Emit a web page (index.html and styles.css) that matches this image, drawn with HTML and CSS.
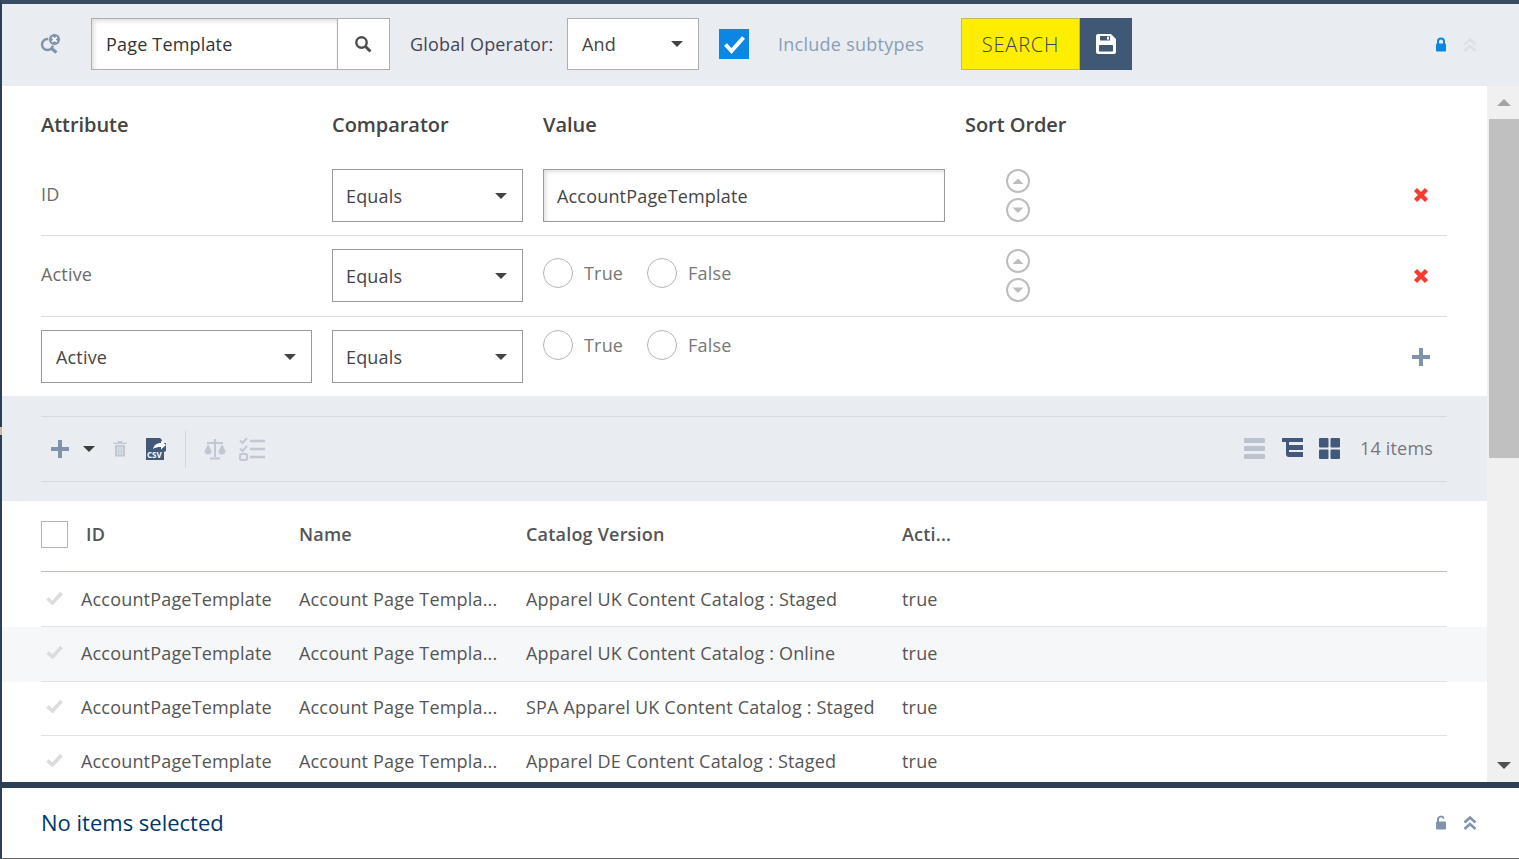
FILE: index.html
```html
<!DOCTYPE html>
<html lang="en">
<head>
<meta charset="utf-8">
<title>Advanced Search</title>
<link rel="stylesheet" href="styles.css">
</head>
<body>
<div class="frame">
  <header class="topbar">
    <svg class="ic-reset" viewBox="0 0 21 21" width="21" height="21"><circle cx="7.500" cy="11.500" r="5.500" fill="none" stroke="#8193ab" stroke-width="2.400"/><path d="M11.500 15.500l5 4" stroke="#8193ab" stroke-width="3.200" fill="none"/><circle cx="14.500" cy="6.500" r="6" fill="#8193ab" stroke="#e9edf2" stroke-width="1"/><path d="M12.200 4.200l4.600 4.600M16.800 4.200l-4.600 4.600" stroke="#fff" stroke-width="1.800"/></svg>
    <div class="type-field">
      <div class="type-value">Page Template</div>
      <div class="type-btn"><svg viewBox="0 0 18 18" width="18" height="18"><circle cx="7.500" cy="7.500" r="5.200" fill="none" stroke="#4d4d4d" stroke-width="2.400"/><path d="M11.500 11.500l5 5" stroke="#4d4d4d" stroke-width="3"/></svg></div>
    </div>
    <span class="op-label">Global Operator:</span>
    <div class="select op-select"><span>And</span><i class="caret"></i></div>
    <div class="check"><svg viewBox="0 0 30 30" width="30" height="30"><path d="M6.500 15.500l6 6.500L24.500 8.500" fill="none" stroke="#fff" stroke-width="4"/></svg></div>
    <span class="sub-label">Include subtypes</span>
    <div class="search-btn">SEARCH</div>
    <div class="save-btn"><svg viewBox="0 0 22 22" width="22" height="22"><path d="M3 1h13l5 5v13a2 2 0 0 1-2 2H3a2 2 0 0 1-2-2V3a2 2 0 0 1 2-2z" fill="#fff"/><rect x="5" y="3" width="10" height="4.500" rx="0.500" fill="#3f5876"/><rect x="12" y="3.600" width="2" height="3" fill="#fff"/><rect x="4" y="12" width="14" height="6.500" rx="0.800" fill="#3f5876"/></svg></div>
    <div class="top-right">
      <svg viewBox="0 0 12 16" width="12" height="16"><path d="M3 7V4.500a3 3 0 0 1 6 0V7" fill="none" stroke="#0a86e3" stroke-width="2"/><rect x="1" y="6.500" width="10" height="8" rx="1" fill="#0a86e3"/></svg>
      <svg class="chev" viewBox="0 0 14 16" width="14" height="16"><path d="M1.500 7.500L7 2.500l5.500 5M1.500 14L7 9l5.500 5" fill="none" stroke="#dde1e7" stroke-width="2.600"/></svg>
    </div>
  </header>

  <div class="middle">
    <main class="content">
      <section class="criteria">
        <div class="crit-head">
          <div>Attribute</div><div>Comparator</div><div>Value</div><div>Sort Order</div>
        </div>
        <div class="crit-row">
          <div class="attr">ID</div>
          <div class="select"><span>Equals</span><i class="caret"></i></div>
          <div class="text-input">AccountPageTemplate</div>
          <div class="sort">
            <svg viewBox="0 0 24 24" width="24" height="24"><circle cx="12" cy="12" r="11" fill="none" stroke="#bdbdbd" stroke-width="2"/><path d="M6.500 15h11L12 9.500z" fill="#bdbdbd"/></svg>
            <svg viewBox="0 0 24 24" width="24" height="24"><circle cx="12" cy="12" r="11" fill="none" stroke="#bdbdbd" stroke-width="2"/><path d="M6.500 9.500h11L12 15z" fill="#bdbdbd"/></svg>
          </div>
          <div class="action"><svg viewBox="0 0 16 16" width="16" height="16"><path d="M2.500 2.500l11 11M13.500 2.500l-11 11" stroke="#f93a2e" stroke-width="4.400"/></svg></div>
        </div>
        <div class="crit-row">
          <div class="attr">Active</div>
          <div class="select"><span>Equals</span><i class="caret"></i></div>
          <div class="radios radios-mid"><i class="radio"></i><span class="radio-label">True</span><i class="radio"></i><span class="radio-label">False</span></div>
          <div class="sort">
            <svg viewBox="0 0 24 24" width="24" height="24"><circle cx="12" cy="12" r="11" fill="none" stroke="#bdbdbd" stroke-width="2"/><path d="M6.500 15h11L12 9.500z" fill="#bdbdbd"/></svg>
            <svg viewBox="0 0 24 24" width="24" height="24"><circle cx="12" cy="12" r="11" fill="none" stroke="#bdbdbd" stroke-width="2"/><path d="M6.500 9.500h11L12 15z" fill="#bdbdbd"/></svg>
          </div>
          <div class="action low"><svg viewBox="0 0 16 16" width="16" height="16"><path d="M2.500 2.500l11 11M13.500 2.500l-11 11" stroke="#f93a2e" stroke-width="4.400"/></svg></div>
        </div>
        <div class="crit-row last">
          <div class="select attr-select"><span>Active</span><i class="caret"></i></div>
          <div class="select"><span>Equals</span><i class="caret"></i></div>
          <div class="radios"><i class="radio"></i><span class="radio-label">True</span><i class="radio"></i><span class="radio-label">False</span></div>
          <div class="sort"></div>
          <div class="action add"><svg viewBox="0 0 18 18" width="18" height="18"><path d="M9 0v18M0 9h18" stroke="#8193ab" stroke-width="4"/></svg></div>
        </div>
      </section>

      <section class="toolband">
        <div class="tools">
          <svg class="t-plus" viewBox="0 0 18 18" width="18" height="18"><path d="M9 0v18M0 9h18" stroke="#8193ab" stroke-width="4"/></svg>
          <i class="caret small"></i>
          <svg class="t-trash" viewBox="0 0 14 16" width="14" height="16"><path d="M5 0h4v1.500h4.500V3H.5V1.500H5z" fill="#c1c8d3"/><path d="M2 4h10v11.500H2z" fill="#c1c8d3"/><path d="M4.800 5.500v8.500M7 5.500v8.500M9.200 5.500v8.500" stroke="#e9edf2" stroke-width="0.900"/></svg>
          <svg class="t-csv" viewBox="0 0 20 22" width="20" height="22"><path d="M0 0h14l2 2v3h4v8l-2 1v8H0z" fill="#43597a"/><path d="M7 11c1-4 4-6 8-6V2.500L20 7l-5 4.500V9c-3 0-6 .5-8 2z" fill="#fff"/><text x="1" y="20" class="csv-text">CSV</text></svg>
          <span class="t-sep"></span>
          <svg class="t-scale" viewBox="0 0 22 22" width="22" height="22"><path d="M11 1v18M6 20.500h10M3 5h16" stroke="#c1c8d3" stroke-width="2"/><circle cx="11" cy="4.500" r="1.800" fill="#c1c8d3"/><path d="M.5 13h7l-3.500-7zM14.500 13h7L18 6z" fill="#c1c8d3"/><path d="M.5 13a3.500 3.500 0 0 0 7 0zM14.500 13a3.500 3.500 0 0 0 7 0z" fill="#c1c8d3"/></svg>
          <svg class="t-list" viewBox="0 0 26 24" width="26" height="24"><path d="M1 3.500l2.500 2.500L8 1M1 11.500l2.500 2.500L8 9" fill="none" stroke="#c1c8d3" stroke-width="2"/><rect x="1" y="17" width="7" height="6" rx="1.500" fill="none" stroke="#c1c8d3" stroke-width="2"/><path d="M11 4h15M11 12h15M11 20h15" stroke="#c1c8d3" stroke-width="2.400"/></svg>
          <div class="views">
            <svg class="v-first" viewBox="0 0 21 21" width="21" height="21"><rect y="0" width="21" height="5" rx="1" fill="#bcc3cf"/><rect y="8" width="21" height="5" rx="1" fill="#bcc3cf"/><rect y="16" width="21" height="5" rx="1" fill="#bcc3cf"/></svg>
            <svg viewBox="0 0 21 21" width="21" height="21"><path d="M0 0h12v4H7v3h14v5H7v2h14v5H7a3 3 0 0 1-3-3V4H0z" fill="#43597a"/><path d="M11 0h10v4H11z" fill="#43597a"/></svg>
            <svg viewBox="0 0 21 21" width="21" height="21"><rect width="9.500" height="9.500" rx="1" fill="#43597a"/><rect x="11.500" width="9.500" height="9.500" rx="1" fill="#43597a"/><rect y="11.500" width="9.500" height="9.500" rx="1" fill="#43597a"/><rect x="11.500" y="11.500" width="9.500" height="9.500" rx="1" fill="#43597a"/></svg>
            <span class="count">14 items</span>
          </div>
        </div>
      </section>

      <section class="results">
        <div class="res-head">
          <div class="res-id"><i class="box"></i><span>ID</span></div>
          <div>Name</div><div>Catalog Version</div><div>Acti...</div>
        </div>
        <div class="res-row r1"><div class="res-inner">
          <div class="res-id"><svg class="tick" viewBox="0 0 17 14" width="17" height="14"><path d="M1.500 7.500l5 4.500L15.500 2" fill="none" stroke="#dcdcdc" stroke-width="3.600"/></svg><span>AccountPageTemplate</span></div>
          <div>Account Page Templa...</div><div>Apparel UK Content Catalog : Staged</div><div>true</div>
        </div></div>
        <div class="res-row r2 alt"><div class="res-inner">
          <div class="res-id"><svg class="tick" viewBox="0 0 17 14" width="17" height="14"><path d="M1.500 7.500l5 4.500L15.500 2" fill="none" stroke="#dcdcdc" stroke-width="3.600"/></svg><span>AccountPageTemplate</span></div>
          <div>Account Page Templa...</div><div>Apparel UK Content Catalog : Online</div><div>true</div>
        </div></div>
        <div class="res-row r3"><div class="res-inner">
          <div class="res-id"><svg class="tick" viewBox="0 0 17 14" width="17" height="14"><path d="M1.500 7.500l5 4.500L15.500 2" fill="none" stroke="#dcdcdc" stroke-width="3.600"/></svg><span>AccountPageTemplate</span></div>
          <div>Account Page Templa...</div><div>SPA Apparel UK Content Catalog : Staged</div><div>true</div>
        </div></div>
        <div class="res-row r3"><div class="res-inner">
          <div class="res-id"><svg class="tick" viewBox="0 0 17 14" width="17" height="14"><path d="M1.500 7.500l5 4.500L15.500 2" fill="none" stroke="#dcdcdc" stroke-width="3.600"/></svg><span>AccountPageTemplate</span></div>
          <div>Account Page Templa...</div><div>Apparel DE Content Catalog : Staged</div><div>true</div>
        </div></div>
      </section>
    </main>
    <aside class="scrollbar">
      <div class="sb-btn"><i class="sb-up"></i></div>
      <div class="sb-thumb"></div>
      <div class="sb-track"></div>
      <div class="sb-btn"><i class="sb-down"></i></div>
    </aside>
  </div>

  <footer class="bottom">
    <div class="bottom-title">No items selected</div>
    <div class="bottom-icons">
      <svg viewBox="0 0 12 16" width="12" height="16"><path d="M3 7V4.500a3 3 0 0 1 5.800-1" fill="none" stroke="#8193ab" stroke-width="2"/><rect x="1" y="6.500" width="10" height="8" rx="1" fill="#8193ab"/></svg>
      <svg viewBox="0 0 14 16" width="14" height="16"><path d="M1.500 7.500L7 2.500l5.500 5M1.500 14L7 9l5.500 5" fill="none" stroke="#8193ab" stroke-width="2.600"/></svg>
    </div>
  </footer>
</div>
</body>
</html>
```
FILE: styles.css
```css
* { box-sizing: border-box; }
html, body { margin: 0; height: 100%; overflow: hidden; }
body { font-family: "Open Sans", "Liberation Sans", sans-serif; font-size: 18px; letter-spacing: 0.18px; color: #555; background: #fff; }

.frame { position: relative; width: 1519px; height: 859px; display: flex; flex-direction: column; border-left: 2px solid #2b3f57; border-top: 4px solid #384c63; border-bottom: 1px solid #666; }
.frame::before { content: ""; position: absolute; left: -2px; top: 423px; width: 2px; height: 8px; background: #c9b9a5; }

.topbar { flex: 0 0 82px; background: #e9edf2; display: flex; align-items: center; padding: 0 0 2px 38px; }
.ic-reset { margin-right: 30px; margin-top: -1px; }
.type-field { display: flex; width: 299px; height: 52px; border: 1px solid #aeaeae; background: #fff; }
.type-value { flex: 1; padding-left: 14px; line-height: 50px; color: #333; box-shadow: inset 2px 2px 4px rgba(0,0,0,.14); }
.type-btn { width: 52px; border-left: 1px solid #aeaeae; display: flex; align-items: center; justify-content: center; padding-right: 2px; }
.op-label { margin-left: 20px; color: #445; white-space: nowrap; width: 157px; }
.select { display: flex; align-items: center; justify-content: space-between; height: 53px; border: 1px solid #9a9a9a; background: #fff; padding: 0 15px 0 13px; color: #444; }
.op-select { width: 132px; height: 52px; border-color: #aeaeae; padding-left: 14px; }
.caret { width: 0; height: 0; border-left: 6px solid transparent; border-right: 6px solid transparent; border-top: 6px solid #444; display: block; }
.check { width: 30px; height: 30px; margin-left: 20px; background: #0a86e3; }
.check svg { display: block; }
.sub-label { margin-left: 29px; color: #8a9db5; width: 183px; white-space: nowrap; letter-spacing: 0.26px; }
.search-btn { width: 119px; height: 52px; background: #ffee00; border: 1px solid #c4b858; color: #36465a; font-size: 20px; font-weight: 300; letter-spacing: 0.8px; line-height: 52px; text-align: center; }
.save-btn { width: 52px; height: 52px; background: #3f5876; display: flex; align-items: center; justify-content: center; }
.top-right { margin-left: auto; margin-top: 2px; padding-right: 42px; display: flex; align-items: center; gap: 16px; }

.middle { flex: 1; display: flex; min-height: 0; }
.content { flex: 1; min-width: 0; overflow: hidden; }

.criteria { padding: 0 40px 0 39px; background: #fff; }
.crit-head, .crit-row { display: grid; grid-template-columns: 291px 211px 422px 106px 1fr; }
.crit-head { height: 70px; align-items: center; padding-top: 6px; color: #444; font-size: 20px; font-weight: 600; letter-spacing: -0.05px; }
.crit-row { padding: 13px 0; height: 80px; align-items: center; border-bottom: 1px solid #dcdcdc; }
.crit-row + .crit-row { height: 81px; padding-bottom: 14px; }
.crit-row.last { border-bottom: 0; height: 79px; padding-bottom: 13px; }
.crit-row .select { width: 191px; }
.crit-row .attr-select { width: 271px; padding-left: 14px; }
.attr { color: #6b6b6b; margin-top: -3px; }
.text-input { width: 402px; height: 53px; border: 1px solid #9a9a9a; padding-left: 13px; line-height: 53px; color: #444; box-shadow: inset 2px 2px 4px rgba(0,0,0,.12); }
.radios { display: flex; align-items: center; align-self: start; color: #777; }
.radios-mid { margin-top: 9px; }
.radio { width: 30px; height: 30px; border: 1px solid #b5b5b5; border-radius: 50%; display: block; }
.radio-label { margin-left: 11px; width: 63px; }
.sort { display: flex; flex-direction: column; align-items: center; gap: 5px; margin-top: -1px; }
.sort svg { display: block; }
.action { display: flex; justify-content: flex-end; padding-right: 18px; margin-top: -1px; }
.action.low { margin-top: 1px; }
.action.add { padding-right: 17px; margin-top: 0; }

.toolband { background: #e9edf2; padding: 20px 40px 19px 39px; }
.tools { height: 66px; border-top: 1px solid #d5d9e0; border-bottom: 1px solid #d5d9e0; display: flex; align-items: center; padding-left: 10px; }
.caret.small { margin-left: 14px; border-top-color: #3d3d3d; }
.t-trash { margin-left: 18px; }
.t-csv { margin-left: 19px; margin-top: -1px; }
.csv-text { font-family: "Open Sans", sans-serif; font-size: 8px; font-weight: 700; letter-spacing: 0; fill: #fff; }
.t-sep { width: 1px; height: 37px; margin-left: 19px; background: #d2d7de; }
.t-scale { margin-left: 18px; margin-top: -1px; }
.t-list { margin-left: 13px; }
.views { margin-left: auto; margin-top: -1px; display: flex; align-items: center; gap: 16px; padding-right: 14px; }
.v-first { margin-right: 1px; }
.count { margin-left: 4px; margin-top: -1px; color: #777; }

.results { background: #fff; }
.res-head { margin: 0 40px 0 39px; height: 71px; padding-bottom: 4px; border-bottom: 1px solid #b9bfc8; display: grid; grid-template-columns: 258px 227px 376px 1fr; align-items: center; color: #555; font-weight: 600; letter-spacing: 0.2px; }
.res-head .res-id { display: flex; align-items: center; }
.box { display: block; width: 27px; height: 27px; border: 1px solid #b5b5b5; margin-right: 18px; }
.res-row { height: 55px; padding: 0 40px 0 39px; }
.res-row.alt { background: #f5f7f9; }
.res-inner { height: 100%; border-bottom: 1px solid #dfe3e8; display: grid; grid-template-columns: 258px 227px 376px 1fr; align-items: start; line-height: 24px; color: #555; white-space: nowrap; }
.r1 .res-inner { padding-top: 15px; }
.r2 .res-inner { padding-top: 14px; }
.r3 .res-inner { padding-top: 13px; }
.r3:nth-child(4) { height: 54px; }
.res-inner .res-id { display: flex; align-items: center; padding-left: 5px; }
.tick { margin-right: 18px; flex: none; margin-top: -2px; }

.scrollbar { flex: 0 0 32px; background: #f0f0f0; display: flex; flex-direction: column; }
.sb-btn { height: 33px; display: flex; align-items: center; justify-content: center; padding-left: 2px; }
.sb-up { border-left: 7px solid transparent; border-right: 7px solid transparent; border-bottom: 7px solid #a3a3a3; }
.sb-down { border-left: 7px solid transparent; border-right: 7px solid transparent; border-top: 7px solid #505050; }
.sb-thumb { height: 339px; margin-left: 2px; background: #c0c0c0; }
.sb-track { flex: 1; }

.bottom { flex: 0 0 76px; border-top: 6px solid #2b3f57; display: flex; align-items: center; justify-content: space-between; padding: 0 42px 2px 39px; background: #fff; }
.bottom-title { color: #00366b; font-size: 22px; letter-spacing: 0; }
.bottom-icons { display: flex; gap: 16px; align-items: center; margin-top: 2px; }
```
